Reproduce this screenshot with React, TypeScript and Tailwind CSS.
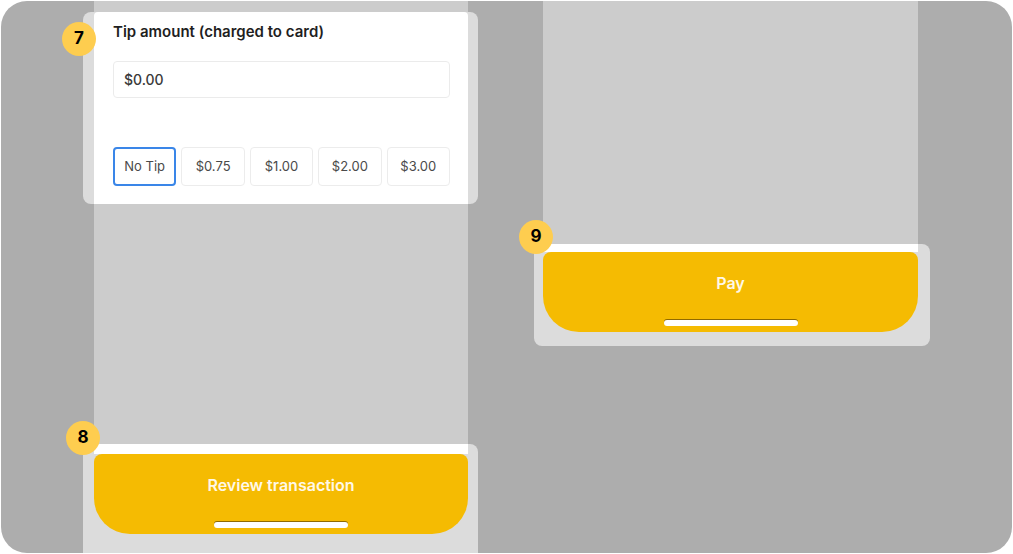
import React from 'react'

function Badge({ n, className }: { n: string; className: string }) {
  return (
    <div
      className={`absolute flex h-[34px] w-[34px] items-center justify-center rounded-full bg-[#fecd4f] text-[17px] font-bold text-black ${className}`}
    >
      {n}
    </div>
  )
}

function HomeBar() {
  return (
    <div className="absolute bottom-[6px] left-1/2 h-[6px] w-[134px] -translate-x-1/2 rounded-full bg-white shadow-[0_-1px_0_rgba(60,40,0,0.55)]" />
  )
}

function YellowButton({ label }: { label: string }) {
  return (
    <div className="relative flex h-[80px] justify-center rounded-t-[8px] rounded-b-[36px] bg-[#f5bb02] pt-[21px]">
      <span className="text-[16px] leading-[20px] font-semibold text-[#fff8e8]">{label}</span>
      <HomeBar />
    </div>
  )
}

const tips = ['No Tip', '$0.75', '$1.00', '$2.00', '$3.00']

export default function App() {
  return (
    <div className="h-[554px] w-[1013px] bg-white pt-px pl-px" style={{ fontFamily: 'Inter, "Noto Sans", sans-serif' }}>
      <div className="flex h-[552px] w-[1011px] gap-[56px] overflow-hidden rounded-[26px] bg-[#adadad] pl-[82px]">
        {/* Left screen */}
        <div className="flex h-full w-[395px] flex-col">
          <div className="ml-[11px] mr-[10px] flex h-full flex-col justify-between bg-[#cccccc] pt-[11px]">
            {/* Card 7 */}
            <div className="relative -ml-[11px] -mr-[10px] rounded-lg bg-[#dcdcdc] pl-[11px] pr-[10px]">
              <Badge n="7" className="-left-[21px] top-[10px]" />
              <div className="rounded-t-sm bg-white pt-[10px] pr-[18px] pb-[18px] pl-[19px]">
                <h3 className="text-[15px] leading-[20px] font-semibold text-[#1f1f1f]">Tip amount (charged to card)</h3>
                <div className="mt-[19px] flex h-[37px] items-center rounded-[4px] border border-[#ebebeb] px-[10px] text-[14px] font-medium text-[#3a3a3a]">
                  $0.00
                </div>
                <div className="mt-[49px] grid grid-cols-5 gap-[5px]">
                  {tips.map((t, i) => (
                    <button
                      key={t}
                      className={`flex h-[39px] items-center justify-center rounded-[4px] text-[13px] text-[#4a4a4a] ${
                        i === 0 ? 'border-2 border-[#3a86e8]' : 'border border-[#ececec]'
                      }`}
                    >
                      {t}
                    </button>
                  ))}
                </div>
              </div>
            </div>

            {/* Card 8 */}
            <div className="relative -ml-[11px] -mr-[10px] rounded-t-lg bg-[#dcdcdc] pl-[11px] pr-[10px] pb-[19px]">
              <Badge n="8" className="-left-[17px] -top-[23px]" />
              <div className="h-[10px] bg-white" />
              <YellowButton label="Review transaction" />
            </div>
          </div>
        </div>

        {/* Right screen */}
        <div className="flex w-[396px] flex-col">
          <div className="ml-[9px] mr-[12px] h-[243px] bg-[#cccccc]" />
          {/* Card 9 */}
          <div className="relative rounded-lg bg-[#dcdcdc] pr-[12px] pb-[14px] pl-[9px]">
            <Badge n="9" className="-left-[15px] -top-[24px]" />
            <div className="h-[8px] bg-white" />
            <YellowButton label="Pay" />
          </div>
        </div>
      </div>
    </div>
  )
}
